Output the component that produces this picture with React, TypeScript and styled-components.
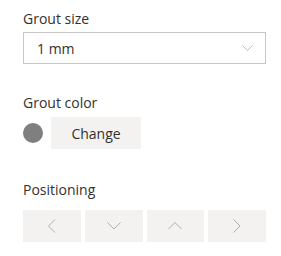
import React from "react";
import styled, { createGlobalStyle } from "styled-components";

const Global = createGlobalStyle`
  html, body { margin: 0; padding: 0; background: #ffffff; }
  body { font-family: "Open Sans", "Noto Sans", sans-serif; color: #323130; }
`;

const Panel = styled.div`
  width: 243px;
  padding: 9px 0 0 23px;
  display: flex;
  flex-direction: column;
`;

const Label = styled.div<{ $top: number; $gap: number }>`
  font-size: 14px;
  line-height: 20px;
  color: #323130;
  margin-top: ${(p) => p.$top}px;
  margin-bottom: ${(p) => p.$gap}px;
`;

const Dropdown = styled.div`
  box-sizing: border-box;
  height: 32px;
  border: 1px solid #c8c6c4;
  display: flex;
  align-items: center;
  justify-content: space-between;
  padding: 0 12px 0 13px;
  font-size: 14px;
  color: #323130;
`;

const ColorRow = styled.div`
  display: flex;
  align-items: center;
  gap: 8px;
`;

const Swatch = styled.div<{ $color: string }>`
  width: 20px;
  height: 20px;
  border-radius: 50%;
  background: ${(p) => p.$color};
`;

const ChangeButton = styled.button`
  width: 90px;
  height: 32px;
  border: none;
  background: #f3f2f1;
  font-family: inherit;
  font-size: 14px;
  color: #323130;
  padding: 0;
`;

const ButtonGrid = styled.div`
  display: grid;
  grid-template-columns: repeat(4, 1fr);
  gap: 4px;
`;

const IconButton = styled.button`
  height: 32px;
  border: none;
  background: #f3f2f1;
  padding: 0;
  display: flex;
  align-items: center;
  justify-content: center;
`;

const Chevron = ({
  dir,
  size,
  color,
}: {
  dir: "left" | "right" | "up" | "down";
  size: number;
  color: string;
}) => {
  const h = size / 2;
  const pts: Record<string, string> = {
    down: `0.5,0.5 ${h},${h} ${size - 0.5},0.5`,
    up: `0.5,${h} ${h},0.5 ${size - 0.5},${h}`,
    left: `${h},0.5 0.5,${h} ${h},${size - 0.5}`,
    right: `0.5,0.5 ${h},${h} 0.5,${size - 0.5}`,
  };
  const horiz = dir === "down" || dir === "up";
  const w = horiz ? size : h + 0.5;
  const ht = horiz ? h + 0.5 : size;
  return (
    <svg width={w} height={ht} viewBox={`0 0 ${w} ${ht}`}>
      <polyline points={pts[dir]} fill="none" stroke={color} strokeWidth={0.9} />
    </svg>
  );
};

export default function App() {
  return (
    <>
      <Global />
      <Panel>
        <Label $top={0} $gap={3}>Grout size</Label>
        <Dropdown>
          <span>1 mm</span>
          <Chevron dir="down" size={11} color="#b8b6b4" />
        </Dropdown>
        <Label $top={29} $gap={4}>Grout color</Label>
        <ColorRow>
          <Swatch $color="#7f7f7f" />
          <ChangeButton>Change</ChangeButton>
        </ColorRow>
        <Label $top={31} $gap={10}>Positioning</Label>
        <ButtonGrid>
          <IconButton aria-label="Left"><Chevron dir="left" size={14} color="#a8a6a4" /></IconButton>
          <IconButton aria-label="Down"><Chevron dir="down" size={14} color="#a8a6a4" /></IconButton>
          <IconButton aria-label="Up"><Chevron dir="up" size={14} color="#a8a6a4" /></IconButton>
          <IconButton aria-label="Right"><Chevron dir="right" size={14} color="#a8a6a4" /></IconButton>
        </ButtonGrid>
      </Panel>
    </>
  );
}
